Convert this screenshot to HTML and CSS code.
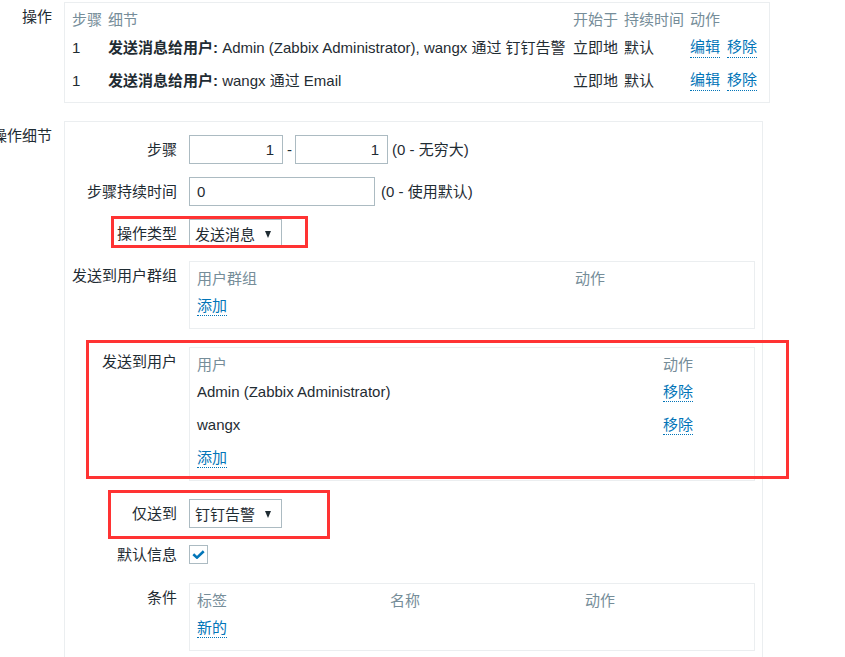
FILE: index.html
```html
<!DOCTYPE html>
<html lang="zh">
<head>
<meta charset="utf-8">
<title>操作</title>
<link rel="stylesheet" href="styles.css">
</head>
<body>
<div class="page">
  <div class="frow">
    <div class="flbl">操作</div>
    <div class="tbox ops">
      <div class="trow thead ops-cols">
        <span>步骤</span><span>细节</span><span>开始于</span><span>持续时间</span><span>动作</span>
      </div>
      <div class="trow ops-cols">
        <span>1</span>
        <span class="nowrap"><b>发送消息给用户:</b> Admin (Zabbix Administrator), wangx 通过 钉钉告警</span>
        <span>立即地</span><span>默认</span>
        <span class="acts"><a class="link">编辑</a><a class="link">移除</a></span>
      </div>
      <div class="trow ops-cols">
        <span>1</span>
        <span class="nowrap"><b>发送消息给用户:</b> wangx 通过 Email</span>
        <span>立即地</span><span>默认</span>
        <span class="acts"><a class="link">编辑</a><a class="link">移除</a></span>
      </div>
    </div>
  </div>

  <div class="frow">
    <div class="flbl">操作细节</div>
    <div class="details">
      <div class="drow">
        <div class="dlbl">步骤</div>
        <div class="dfield">
          <input class="inp num w94" type="text" value="1">
          <span class="dash">-</span>
          <input class="inp num w93" type="text" value="1">
          <span class="hint">(0 - 无穷大)</span>
        </div>
      </div>
      <div class="drow">
        <div class="dlbl">步骤持续时间</div>
        <div class="dfield gap6">
          <input class="inp w186" type="text" value="0">
          <span class="hint">(0 - 使用默认)</span>
        </div>
      </div>
      <div class="drow">
        <div class="mark mark-type"></div>
        <div class="dlbl">操作类型</div>
        <div class="dfield">
          <span class="sel"><span class="sel-text">发送消息</span><span class="caret"></span></span>
        </div>
      </div>
      <div class="drow after-table">
        <div class="dlbl">发送到用户群组</div>
        <div class="dfield">
          <div class="tbox sub">
            <div class="trow thead grp-cols"><span>用户群组</span><span>动作</span></div>
            <div class="trow grp-cols"><span><a class="link">添加</a></span></div>
          </div>
        </div>
      </div>
      <div class="drow after-table">
        <div class="mark mark-users"></div>
        <div class="dlbl">发送到用户</div>
        <div class="dfield">
          <div class="tbox sub">
            <div class="trow thead usr-cols"><span>用户</span><span>动作</span></div>
            <div class="trow usr-cols"><span>Admin (Zabbix Administrator)</span><span><a class="link">移除</a></span></div>
            <div class="trow usr-cols"><span>wangx</span><span><a class="link">移除</a></span></div>
            <div class="trow usr-cols"><span><a class="link">添加</a></span></div>
          </div>
        </div>
      </div>
      <div class="drow after-sel">
        <div class="mark mark-only"></div>
        <div class="dlbl">仅送到</div>
        <div class="dfield">
          <span class="sel"><span class="sel-text">钉钉告警</span><span class="caret"></span></span>
        </div>
      </div>
      <div class="drow after-chk">
        <div class="dlbl chk-lbl">默认信息</div>
        <div class="dfield">
          <span class="chk">
            <svg width="13" height="9" viewBox="0 0 13 9"><polyline points="1.3,4.3 5,7.6 11.7,1.3" fill="none" stroke="#0275b8" stroke-width="2.6"/></svg>
          </span>
        </div>
      </div>
      <div class="drow">
        <div class="dlbl">条件</div>
        <div class="dfield">
          <div class="tbox sub">
            <div class="trow thead cond-cols"><span>标签</span><span>名称</span><span>动作</span></div>
            <div class="trow cond-cols"><span><a class="link">新的</a></span></div>
          </div>
        </div>
      </div>
    </div>
  </div>
</div>
</body>
</html>
```

FILE: styles.css
```css
* { box-sizing: border-box; }
html, body { margin: 0; padding: 0; overflow: hidden; background: #fff; }
body {
  font-family: "Liberation Sans", "Noto Sans CJK SC", sans-serif;
  font-size: 15px;
  line-height: 18px;
  color: #1f2c33;
}
.page { padding-top: 2px; }

.frow { display: flex; align-items: flex-start; gap: 12px; }
.frow + .frow { margin-top: 18px; }
.flbl {
  width: 52px; flex: none;
  display: flex; justify-content: flex-end;
  white-space: nowrap;
  padding-top: 6px;
}

.tbox { border: 1px solid #ebeef0; padding: 8px 7px 6px; background: #fff; }
.ops { width: 706px; padding-bottom: 5px; }
.sub { width: 566px; }

.trow { display: grid; align-items: center; }
.trow > span { white-space: nowrap; }
.thead { color: #768d99; padding-bottom: 1px; }
.ops .thead { padding-bottom: 2px; }
.trow:not(.thead) { height: 33px; }

.ops-cols { grid-template-columns: 36px 465px 51px 66px 1fr; }
.grp-cols { grid-template-columns: 378px 1fr; }
.usr-cols { grid-template-columns: 466px 1fr; }
.cond-cols { grid-template-columns: 193px 195px 1fr; }

.nowrap { white-space: nowrap; }
b { font-weight: bold; }
.acts { display: flex; gap: 7px; }

.link {
  color: #0275b8;
  text-decoration: none;
  border-bottom: 1px dotted #0275b8;
  padding-bottom: 1px;
  cursor: pointer;
}

.details {
  width: 699px;
  border: 1px solid #ebeef0;
  padding: 13px 0 20px;
}
.drow {
  position: relative;
  display: grid;
  grid-template-columns: 112px 1fr;
  column-gap: 12px;
  align-items: start;
  margin-bottom: 13px;
}
.drow.after-table { margin-bottom: 18px; }
.drow.after-sel { margin-bottom: 17px; }
.drow.after-chk { margin-bottom: 19px; }
.dlbl { text-align: right; white-space: nowrap; padding-top: 6px; }
.dlbl.chk-lbl { padding-top: 1px; }
.dfield { display: flex; align-items: center; gap: 4px; }
.dfield.gap6 { gap: 6px; }

.inp {
  height: 29px;
  border: 1px solid #acbbc2;
  background: #fff;
  font: inherit;
  color: #1f2c33;
  padding: 0 7px;
  margin: 0;
  outline: none;
}
.inp.num { text-align: right; padding: 0 8px; }
.w94 { width: 94px; }
.w93 { width: 93px; }
.w186 { width: 186px; }
.dash { margin-right: -1px; }
.hint { white-space: nowrap; }

.sel {
  display: inline-flex;
  align-items: center;
  justify-content: space-between;
  width: 93px;
  height: 29px;
  border: 1px solid #acbbc2;
  padding: 2px 10px 0 5px;
  background: #fff;
}
.caret {
  width: 0; height: 0;
  border-left: 3px solid transparent;
  border-right: 3px solid transparent;
  border-top: 7px solid #1f2c33;
  margin-top: -1px;
}

.chk {
  width: 19px; height: 19px;
  border: 1px solid #acbbc2;
  display: inline-flex;
  align-items: center;
  justify-content: center;
  background: #fff;
}
.chk svg { display: block; }

.mark {
  position: absolute;
  border: 3px solid #f33;
  pointer-events: none;
  z-index: 2;
}
.mark-type { left: 46px; top: -3px; width: 197px; height: 32px; }
.mark-users { left: 21px; top: -7px; width: 703px; height: 139px; }
.mark-only { left: 43px; top: -9px; width: 222px; height: 49px; }
```
